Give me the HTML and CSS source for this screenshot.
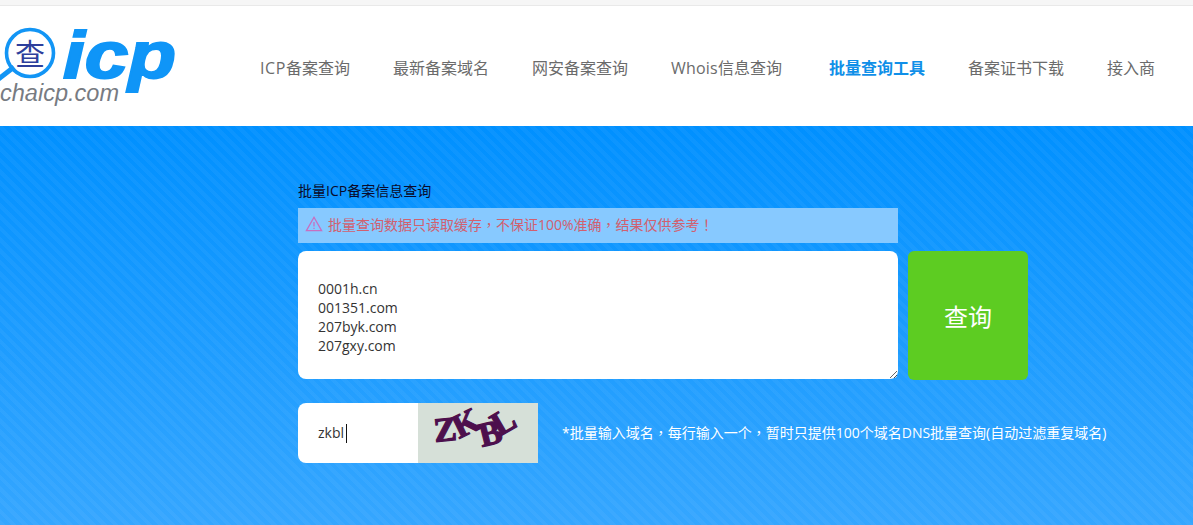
FILE: index.html
```html
<!DOCTYPE html>
<html lang="zh-CN">
<head>
<meta charset="utf-8">
<title>批量ICP备案信息查询</title>
<link rel="stylesheet" href="styles.css">
</head>
<body>
<div class="topstrip"></div>
<header class="header">
  <a class="logo" href="#">
    <svg class="logo-svg" width="180" height="120" viewBox="0 0 180 120">
      <path class="logo-handle" d="M14 61 L-4 75"/>
      <circle class="logo-ring" cx="30" cy="47" r="23.5"/>
      <text class="logo-cha" x="30" y="59" text-anchor="middle">查</text>
      <text class="logo-icp" x="63" y="72" textLength="113" lengthAdjust="spacingAndGlyphs">icp</text>
      <text class="logo-url" x="0" y="95" textLength="119" lengthAdjust="spacingAndGlyphs">chaicp.com</text>
    </svg>
  </a>
  <nav class="nav">
    <a href="#"><span class="lat-a">ICP</span>备案查询</a>
    <a href="#">最新备案域名</a>
    <a href="#">网安备案查询</a>
    <a href="#"><span class="lat-b">Whois</span>信息查询</a>
    <a href="#" class="active">批量查询工具</a>
    <a href="#">备案证书下载</a>
    <a href="#">接入商</a>
  </nav>
</header>
<main class="main">
  <div class="panel">
    <h1 class="title">批量ICP备案信息查询</h1>
    <div class="alert">
      <svg class="alert-icon" width="18" height="18" viewBox="0 0 18 18">
        <path d="M9 2.2 L16.6 15.6 H1.4 Z"/>
        <path d="M9 7 V11.5 M9 12.7 V14"/>
      </svg>
      <span>批量查询数据只读取缓存<span class="punct" lang="zh-TW">，</span>不保证100%准确<span class="punct" lang="zh-TW">，</span>结果仅供参考<span class="punct" lang="zh-TW">！</span></span>
    </div>
    <div class="query-row">
      <textarea class="domains" spellcheck="false">
0001h.cn
001351.com
207byk.com
207gxy.com</textarea>
      <button class="submit" type="button">查询</button>
    </div>
    <div class="captcha-row">
      <div class="captcha-box">
        <div class="captcha-input">zkbl<i class="caret"></i></div>
        <svg class="captcha-img" width="120" height="60" viewBox="0 0 120 60">
          <text class="cap" transform="translate(17 39) rotate(-6)">Z</text>
          <text class="cap" transform="translate(41 36) rotate(-26)">K</text>
          <text class="cap" transform="translate(64 44) rotate(-14)">B</text>
          <text class="cap" transform="translate(81 34) rotate(-30)">L</text>
        </svg>
      </div>
      <p class="hint">*批量输入域名<span class="punct" lang="zh-TW">，</span>每行输入一个<span class="punct" lang="zh-TW">，</span>暂时只提供100个域名DNS批量查询(自动过滤重复域名)</p>
    </div>
  </div>
</main>
</body>
</html>
```
FILE: styles.css
```css
* { box-sizing: border-box; }
html, body { margin: 0; height: 100%; overflow: hidden; }
body {
  font-family: "Open Sans", "Noto Sans CJK SC", sans-serif;
  display: flex;
  flex-direction: column;
  background: #fff;
}
.topstrip { height: 6px; background: #f6f6f6; border-bottom: 1px solid #e9e9e9; flex: none; }
.header { height: 120px; flex: none; display: flex; align-items: center; justify-content: space-between; background: #fff; padding-right: 38px; }
.logo { display: block; align-self: flex-start; }
.logo-svg { display: block; overflow: hidden; }
.nav { display: flex; gap: 43px; font-size: 16px; line-height: 24px; margin-top: 4px; }
.nav a { color: #6b6b6b; text-decoration: none; white-space: nowrap; }
.nav a.active { color: #0f8fe8; font-weight: 700; margin-left: 4px; }
.lat-a { letter-spacing: .6px; }
.lat-b { letter-spacing: .2px; }
.punct { font-family: "Noto Sans CJK TC", sans-serif; }
.main {
  flex: 1;
  background-color: #1a9bff;
  background-image:
    repeating-linear-gradient(45deg, rgba(255,255,255,.04) 0 4px, rgba(255,255,255,0) 4px 8px),
    linear-gradient(180deg, #0090ff 0%, #35a6ff 100%);
  padding: 56px 0 0 298px;
}
.panel { width: 900px; }
.title { margin: 0 0 8px; font-size: 14px; line-height: 18px; font-weight: 400; color: #0a0a2a; }
.alert { width: 600px; height: 35px; display: flex; align-items: center; gap: 5px; padding: 0 0 3px 7px; background: #87c9ff; color: #d1606f; font-size: 14px; }
.alert-icon { flex: none; }
.alert-icon path { fill: none; stroke: #c76fc0; stroke-width: 1.3; }
.query-row { display: flex; gap: 10px; margin-top: 8px; align-items: flex-start; }
.domains { width: 600px; height: 128px; border: 0; border-radius: 8px; background: #fff; padding: 28px 20px 0; font: 14px/19px "Open Sans", "Noto Sans CJK SC", sans-serif; color: #333; outline: 0; resize: vertical; display: block; }
.submit { width: 120px; height: 129px; border: 0; border-radius: 6px; background: #5dcc22; color: #fff; font: 24px "Noto Sans CJK SC", sans-serif; }
.captcha-row { display: flex; align-items: center; margin-top: 23px; gap: 24px; }
.captcha-box { display: flex; width: 240px; height: 60px; border-radius: 8px 0 0 8px; overflow: hidden; flex: none; }
.captcha-input { width: 120px; background: #fff; padding-left: 20px; font-size: 14px; line-height: 60px; color: #333; display: flex; align-items: center; }
.caret { display: block; width: 1px; height: 19px; background: #111; margin-left: 2px; }
.captcha-img { display: block; background: #d6e0d8; }
.cap { font: 700 34px "Liberation Serif", serif; fill: #4d0f4d; stroke: #4d0f4d; stroke-width: 1.2; }
.hint { margin: 0; padding-bottom: 2px; font-size: 14px; line-height: 20px; color: #fff; white-space: nowrap; }
.logo-ring { fill: none; stroke: #1295f5; stroke-width: 3.6; }
.logo-handle { stroke: #1295f5; stroke-width: 5; fill: none; }
.logo-cha { font: 30px "Noto Sans CJK SC", sans-serif; fill: #2d3f9c; }
.logo-icp { font: italic 700 66px "Liberation Sans", sans-serif; fill: #0f95f7; stroke: #0f95f7; stroke-width: 2; }
.logo-url { font: italic 400 23px "Liberation Sans", sans-serif; fill: #777b82; }
```
